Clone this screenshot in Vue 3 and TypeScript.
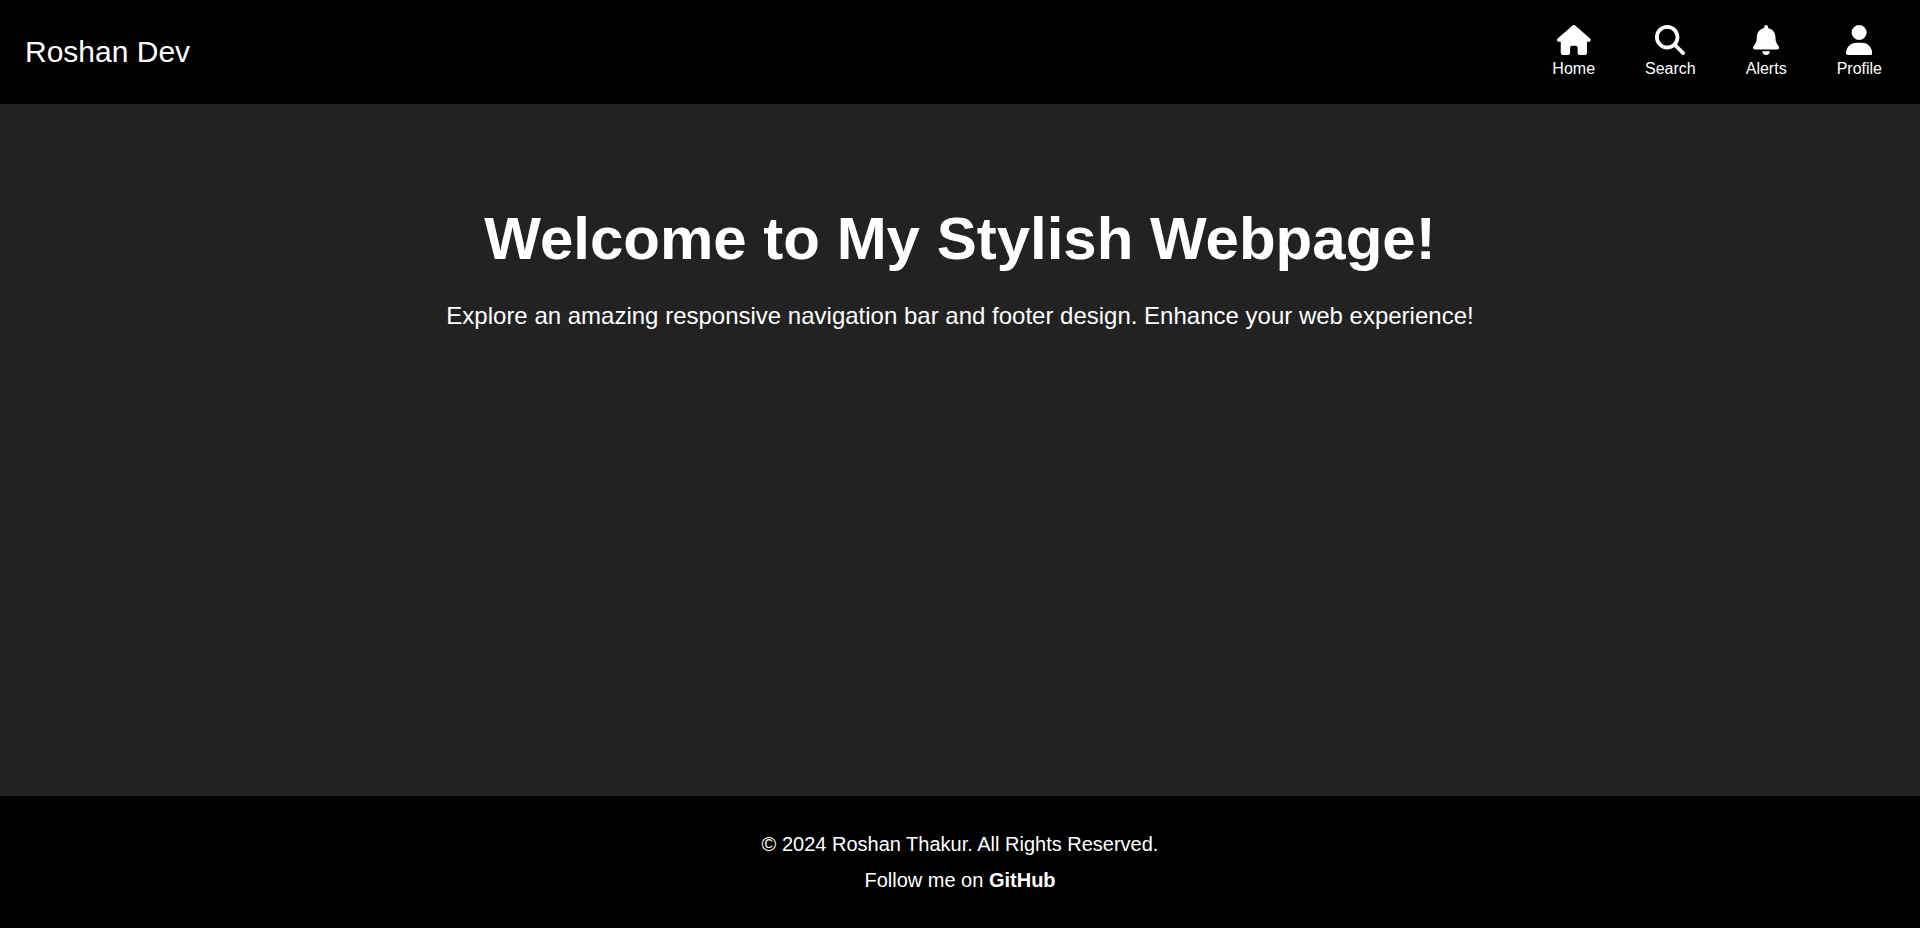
<script setup lang="ts">
interface NavItem {
  label: string
  viewBox: string
  path: string
}

const navItems: NavItem[] = [
  {
    label: 'Home',
    viewBox: '0 0 576 512',
    path: 'M575.8 255.5c0 18-15 32.1-32 32.1h-32l.7 160.2c0 2.7-.2 5.4-.5 8.1V472c0 22.1-17.9 40-40 40H456c-1.1 0-2.2 0-3.3-.1c-1.4 .1-2.8 .1-4.2 .1H416 392c-22.1 0-40-17.9-40-40V448 384c0-17.7-14.3-32-32-32H256c-17.7 0-32 14.3-32 32v64 24c0 22.1-17.9 40-40 40H160 128.1c-1.5 0-3-.1-4.5-.2c-1.2 .1-2.4 .2-3.6 .2H104c-22.1 0-40-17.9-40-40V360c0-.9 0-1.9 .1-2.8V287.6H32c-18 0-32-14-32-32.1c0-9 3-17 10-24L266.4 8c7-7 15-8 22-8s15 2 21 7L564.8 231.5c8 7 12 15 11 24z',
  },
  {
    label: 'Search',
    viewBox: '0 0 512 512',
    path: 'M416 208c0 45.9-14.9 88.3-40 122.7L502.6 457.4c12.5 12.5 12.5 32.8 0 45.3s-32.8 12.5-45.3 0L330.7 376c-34.4 25.2-76.8 40-122.7 40C93.1 416 0 322.9 0 208S93.1 0 208 0S416 93.1 416 208zM208 352a144 144 0 1 0 0-288 144 144 0 1 0 0 288z',
  },
  {
    label: 'Alerts',
    viewBox: '0 0 448 512',
    path: 'M224 0c-17.7 0-32 14.3-32 32V51.2C119 66 64 130.6 64 208v18.8c0 47-17.3 92.4-48.5 127.6l-7.4 8.3c-8.4 9.4-10.4 22.9-5.3 34.4S19.4 416 32 416H416c12.6 0 24-7.4 29.2-18.9s3.1-25-5.3-34.4l-7.4-8.3C401.3 319.2 384 273.9 384 226.8V208c0-77.4-55-142-128-156.8V32c0-17.7-14.3-32-32-32zm45.3 493.3c12-12 18.7-28.3 18.7-45.3H224 160c0 17 6.7 33.3 18.7 45.3s28.3 18.7 45.3 18.7s33.3-6.7 45.3-18.7z',
  },
  {
    label: 'Profile',
    viewBox: '0 0 448 512',
    path: 'M224 256A128 128 0 1 0 224 0a128 128 0 1 0 0 256zm-45.7 48C79.8 304 0 383.8 0 482.3C0 498.7 13.3 512 29.7 512H418.3c16.4 0 29.7-13.3 29.7-29.7C448 383.8 368.2 304 269.7 304H178.3z',
  },
]
</script>

<template>
  <div class="page">
    <header class="navbar">
      <div class="brand">Roshan Dev</div>
      <nav class="nav" aria-label="Main">
        <a v-for="item in navItems" :key="item.label" class="nav-link" href="#">
          <svg class="nav-icon" :viewBox="item.viewBox" aria-hidden="true">
            <path :d="item.path" />
          </svg>
          <span>{{ item.label }}</span>
        </a>
      </nav>
    </header>

    <main class="hero">
      <h1 class="title">Welcome to My Stylish Webpage!</h1>
      <p class="lead">
        Explore an amazing responsive navigation bar and footer design. Enhance your web experience!
      </p>
    </main>

    <footer class="footer">
      <p>© 2024 Roshan Thakur. All Rights Reserved.</p>
      <p>Follow me on <a class="footer-link" href="#">GitHub</a></p>
    </footer>
  </div>
</template>

<style>
body {
  margin: 0;
  background: #222;
}
</style>

<style scoped>
.page {
  display: flex;
  flex-direction: column;
  min-height: 100vh;
  color: #fff;
  background: #222;
  font-family: "Liberation Sans", Arial, sans-serif;
}

.navbar {
  display: flex;
  align-items: center;
  justify-content: space-between;
  padding: 25px 38px 25px 25px;
  background: #000;
}

.brand {
  font-size: 30px;
  line-height: 34px;
}

.nav {
  display: flex;
  gap: 50px;
}

.nav-link {
  display: flex;
  flex-direction: column;
  align-items: center;
  gap: 4px;
  color: #fff;
  font-size: 16px;
  line-height: 20px;
  text-decoration: none;
}

.nav-icon {
  height: 30px;
  fill: currentColor;
}

.hero {
  flex: 1;
  padding: 100px 20px;
  text-align: center;
}

.title {
  margin: 0 0 28px;
  font-size: 60px;
  line-height: 70px;
}

.lead {
  margin: 0;
  font-size: 24px;
  line-height: 28px;
}

.footer {
  display: flex;
  flex-direction: column;
  gap: 12px;
  padding: 36px 20px;
  background: #000;
  text-align: center;
  font-size: 20px;
  line-height: 24px;
}

.footer p {
  margin: 0;
}

.footer-link {
  color: #fff;
  font-weight: bold;
  text-decoration: none;
}
</style>
